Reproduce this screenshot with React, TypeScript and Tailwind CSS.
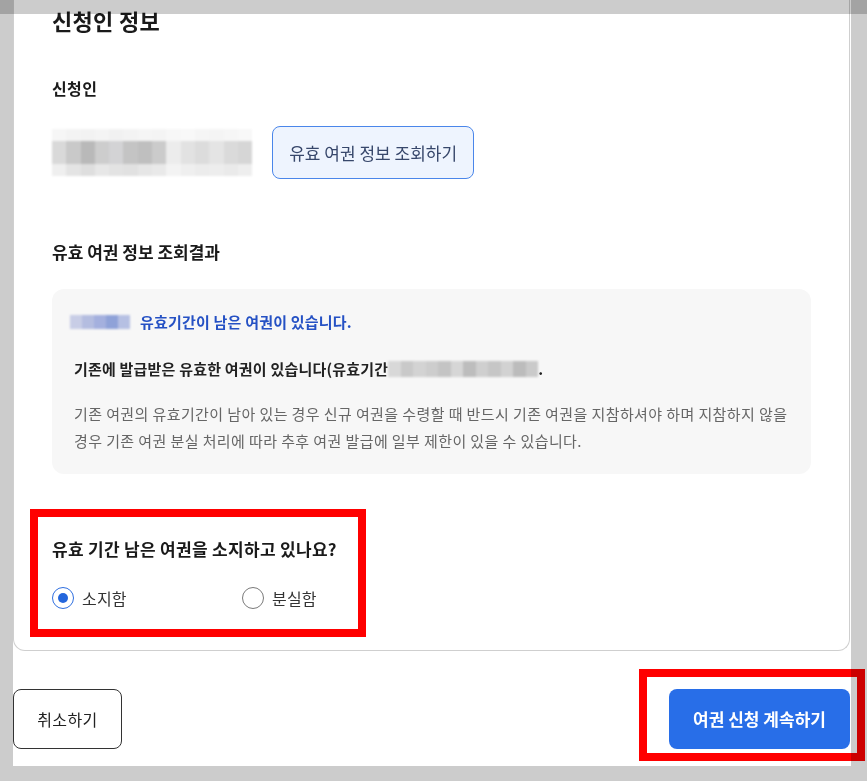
import type { CSSProperties } from "react";

const font = { fontFamily: '"Noto Sans CJK KR", "Noto Sans", sans-serif' } as CSSProperties;

// pixelated blur stand-ins for masked personal data
const nameCells = [
  ["#f6f6f6", "#f3f3f3", "#f2f2f2", "#f4f4f4", "#f1f1f1", "#f3f3f3", "#f5f5f5", "#f4f4f4", "#f7f7f7", "#f8f8f8", "#f5f5f5", "#f4f4f4", "#f6f6f6", "#f8f8f8"],
  ["#d9d9d9", "#c9c9c9", "#b9b9b9", "#cdcdcd", "#d3d3d5", "#c4c4c4", "#bfbfbf", "#cbcbcb", "#ececec", "#e2e2e2", "#dcdcdc", "#e4e4e4", "#dadada", "#d6d6d6"],
  ["#efefef", "#e4e4e4", "#dedede", "#e7e7e7", "#e3e3e3", "#e1e1e1", "#e6e6e6", "#e9e9e9", "#f3f3f3", "#efefef", "#ececec", "#ededed", "#eaeaea", "#eeeeee"],
];
const chipCells = ["#c8cde6", "#b4bde0", "#a4b0de", "#8fa2d8", "#b6c0e3"];
const dateCells = ["#d8d8d8", "#c9c9c9", "#d3d3d3", "#cdcdcd", "#c4c4c4", "#d6d6d6", "#bdbdbd", "#cfcfcf", "#c6c6c6", "#d2d2d2", "#bcbcbc", "#cacaca"];

function Mosaic({ rows, cell }: { rows: string[][]; cell: number }) {
  return (
    <div className="flex flex-col blur-[1px]">
      {rows.map((row, r) => (
        <div key={r} className="flex">
          {row.map((c, i) => (
            <div key={i} style={{ background: c, width: cell, height: r === 1 ? cell + 8 : cell - 2 }} />
          ))}
        </div>
      ))}
    </div>
  );
}

function Radio({ checked, label }: { checked?: boolean; label: string }) {
  return (
    <label className="flex items-center gap-2">
      <span
        className={
          checked
            ? "flex h-[22px] w-[22px] items-center justify-center rounded-full border-[1.5px] border-[#2f6fe0] bg-white"
            : "flex h-[22px] w-[22px] items-center justify-center rounded-full border border-[#7a7a7a] bg-white"
        }
      >
        {checked && <span className="h-[10px] w-[10px] rounded-full bg-[#2466dc]" />}
      </span>
      <span className="text-[16px] leading-[22px] tracking-[0.2px] text-[#333]">{label}</span>
    </label>
  );
}

export default function App() {
  return (
    <div className="relative h-[781px] w-[867px] bg-[#cccccc]" style={font}>
      <div className="ml-[13px] flex h-[766px] w-[838px] flex-col bg-white">
        <section className="w-[837px] rounded-b-[12px] border border-t-0 border-[#cfcfcf] pb-[13px] pl-[38px]">
          <h1 className="pt-[6px] text-[22px] font-bold leading-[28px] tracking-[0.3px] text-[#1a1a1a]">신청인 정보</h1>

          <h2 className="mt-[43px] text-[16px] font-bold leading-[22px] tracking-[0.4px] text-[#1a1a1a]">신청인</h2>
          <div className="mt-[27px] flex h-[53px] items-center gap-[20px]">
            <Mosaic rows={nameCells} cell={14.3} />
            <button className="h-[53px] w-[202px] rounded-[8px] border border-[#4a86ea] bg-[#eef4fe] text-[17px] text-[#37476b]">
              유효 여권 정보 조회하기
            </button>
          </div>

          <h2 className="mt-[62px] text-[17px] font-bold leading-[22px] text-[#1a1a1a]">유효 여권 정보 조회결과</h2>
          <div className="mt-[26px] h-[185px] w-[759px] rounded-[12px] bg-[#f7f7f7] px-[22px] pt-[22px]">
            <div className="flex h-[22px] items-center">
              <div className="-ml-[4px] mr-[10px] flex blur-[1px]">
                {chipCells.map((c, i) => (
                  <div key={i} style={{ background: c, width: 12, height: 14 }} />
                ))}
              </div>
              <p className="text-[15px] font-bold tracking-[0.2px] text-[#2551c4]">유효기간이 남은 여권이 있습니다.</p>
            </div>
            <div className="mt-[25px] flex h-[22px] items-center text-[15px] font-bold tracking-[0.2px] text-[#222]">
              <span>기존에 발급받은 유효한 여권이 있습니다(유효기간</span>
              <div className="flex blur-[1px]">
                {dateCells.map((c, i) => (
                  <div key={i} style={{ background: c, width: 12.5, height: 16 }} />
                ))}
              </div>
              <span>.</span>
            </div>
            <p className="mt-[20px] break-keep text-[15px] leading-[27px] tracking-[0.4px] text-[#666]">
              기존 여권의 유효기간이 남아 있는 경우 신규 여권을 수령할 때 반드시 기존 여권을 지참하셔야 하며 지참하지 않을 경우 기존 여권 분실 처리에 따라 추후 여권 발급에 일부 제한이 있을 수 있습니다.
            </p>
          </div>

          <div className="-ml-[22px] mt-[35px] h-[128px] w-[336px] border-8 border-[#ff0000] pl-[14px] pt-[21px]">
            <p className="text-[17px] font-bold leading-[22px] tracking-[0.3px] text-[#1a1a1a]">유효 기간 남은 여권을 소지하고 있나요?</p>
            <div className="mt-[27px] flex">
              <div className="w-[190px]">
                <Radio checked label="소지함" />
              </div>
              <Radio label="분실함" />
            </div>
          </div>
        </section>

        <div className="mt-[38px] flex justify-between pr-[1px]">
          <button className="h-[60px] w-[109px] rounded-[8px] border border-[#333] bg-white text-[16px] tracking-[0.4px] text-[#222]">
            취소하기
          </button>
          <button className="relative h-[60px] w-[181px] rounded-[8px] bg-[#286ee8] text-[17px] font-bold text-white">
            여권 신청 계속하기
            <span className="pointer-events-none absolute -bottom-[12px] -left-[30px] -right-[15px] -top-[20px] border-8 border-[#ff0000] mix-blend-multiply" />
          </button>
        </div>
      </div>

      <div className="pointer-events-none absolute left-0 top-0 h-[14px] w-full bg-black/20" />
    </div>
  );
}
